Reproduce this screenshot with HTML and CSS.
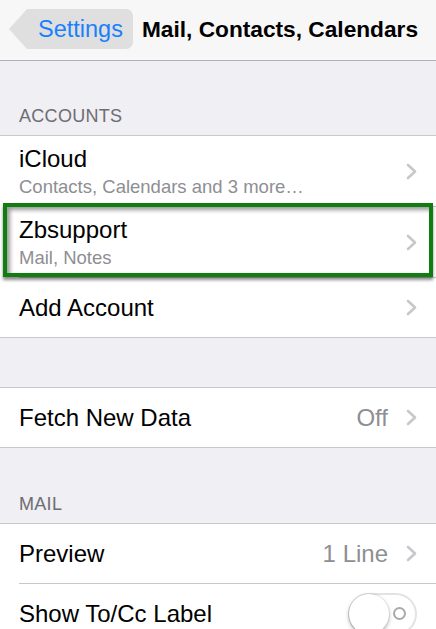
FILE: index.html
```html
<!DOCTYPE html>
<html>
  <head>
    <title>Mail, Contacts, Calendars</title>
    <link rel="stylesheet" href="styles.css">
  </head>
  <body>
    <div class="navbar">
      <div class="back">
        <svg class="back-tip" width="18" height="40" viewBox="0 0 18 40">
          <polygon points="18,0 0,20 18,40" fill="#dfdfdf" />
        </svg>
        <span class="back-label">Settings</span>
      </div>
      <div class="nav-title">Mail, Contacts, Calendars</div>
    </div>

    <div class="section-header">ACCOUNTS</div>
    <div class="group">
      <div class="row double">
        <div class="row-body">
          <div class="row-text">
            <div class="row-title">iCloud</div>
            <div class="row-sub">Contacts, Calendars and 3 more…</div>
          </div>
          <svg class="chevron" width="11" height="17" viewBox="0 0 11 17">
            <polyline points="2,2 9,8.5 2,15" />
          </svg>
        </div>
      </div>
      <div class="row double highlight">
        <div class="row-body">
          <div class="row-text">
            <div class="row-title">Zbsupport</div>
            <div class="row-sub">Mail, Notes</div>
          </div>
          <svg class="chevron" width="11" height="17" viewBox="0 0 11 17">
            <polyline points="2,2 9,8.5 2,15" />
          </svg>
        </div>
      </div>
      <div class="row">
        <div class="row-body">
          <div class="row-title">Add Account</div>
          <svg class="chevron" width="11" height="17" viewBox="0 0 11 17">
            <polyline points="2,2 9,8.5 2,15" />
          </svg>
        </div>
      </div>
    </div>

    <div class="group spaced">
      <div class="row">
        <div class="row-body">
          <div class="row-title">Fetch New Data</div>
          <div class="row-value">Off</div>
          <svg class="chevron" width="11" height="17" viewBox="0 0 11 17">
            <polyline points="2,2 9,8.5 2,15" />
          </svg>
        </div>
      </div>
    </div>

    <div class="section-header tall">MAIL</div>
    <div class="group">
      <div class="row">
        <div class="row-body">
          <div class="row-title">Preview</div>
          <div class="row-value">1 Line</div>
          <svg class="chevron" width="11" height="17" viewBox="0 0 11 17">
            <polyline points="2,2 9,8.5 2,15" />
          </svg>
        </div>
      </div>
      <div class="row">
        <div class="row-body">
          <div class="row-title">Show To/Cc Label</div>
          <div class="switch">
            <div class="knob"></div>
            <div class="ring"></div>
          </div>
        </div>
      </div>
    </div>
  </body>
</html>
```

FILE: styles.css
```css
body {
  margin: 0;
  width: 436px;
  height: 629px;
  overflow: hidden;
  background-color: #efeff4;
  font-family: "Liberation Sans", Arial, sans-serif;
  color: #000;
}
.navbar {
  display: flex;
  align-items: center;
  padding: 0 0 2px 9px;
  box-sizing: border-box;
  background-color: #f7f7f7;
  border-bottom: 1px solid #b1b1b1;
  height: 61px;
}
.back {
  display: flex;
  height: 40px;
}
.back-tip {
  display: block;
}
.back-label {
  background-color: #dfdfdf;
  border-radius: 0 7px 7px 0;
  padding: 0 10px 0 11px;
  line-height: 40px;
  font-size: 23.5px;
  color: #1a7ffb;
}
.nav-title {
  margin-left: 9px;
  font-size: 22.7px;
  font-weight: bold;
  white-space: nowrap;
}
.section-header {
  height: 74px;
  box-sizing: border-box;
  display: flex;
  align-items: flex-end;
  padding: 0 19px 8px;
  font-size: 18px;
  letter-spacing: 0.3px;
  line-height: 22px;
  color: #6d6d72;
}
.section-header.tall {
  height: 75px;
}
.group {
  background-color: #fff;
  border-top: 1px solid #c8c7cc;
  border-bottom: 1px solid #c8c7cc;
}
.group.spaced {
  margin-top: 49px;
}
.row {
  padding-left: 19px;
}
.row-body {
  display: flex;
  align-items: center;
  height: 59px;
  padding-right: 19px;
  border-bottom: 1px solid #c8c7cc;
}
.row:last-child .row-body {
  border-bottom: none;
}
.row.double .row-body {
  height: 70px;
}
.row-text {
  flex: 1;
  padding-top: 1px;
}
.row-title {
  flex: 1;
  font-size: 24px;
  line-height: 28px;
  white-space: nowrap;
}
.row-sub {
  margin-top: 3px;
  font-size: 18.5px;
  line-height: 22px;
  color: #8e8e93;
}
.row-value {
  font-size: 24px;
  color: #8e8e93;
  margin-right: 18px;
}
.chevron {
  display: block;
}
.chevron polyline {
  fill: none;
  stroke: #c7c7cc;
  stroke-width: 2.6;
  stroke-linecap: round;
  stroke-linejoin: round;
}
.highlight {
  position: relative;
}
.highlight::after {
  content: "";
  position: absolute;
  top: -4px;
  bottom: 1px;
  left: 3px;
  right: 3px;
  border: 4px solid #0f7d0f;
  box-shadow: inset 3px 3px 4px rgba(0, 0, 0, 0.4), 0 3px 3px rgba(0, 0, 0, 0.45);
}
.switch {
  width: 69px;
  height: 42px;
  box-sizing: border-box;
  border: 2px solid #e3e3e3;
  border-radius: 21px;
  display: flex;
  align-items: center;
  justify-content: space-between;
}
.knob {
  width: 40px;
  height: 40px;
  margin-left: -1px;
  border-radius: 50%;
  background-color: #fff;
  box-shadow: 0 2px 4px rgba(0, 0, 0, 0.3), 0 0 0 1px rgba(0, 0, 0, 0.06);
}
.ring {
  width: 9px;
  height: 9px;
  margin-right: 9px;
  border: 2px solid #a9a9a9;
  border-radius: 50%;
}
```
